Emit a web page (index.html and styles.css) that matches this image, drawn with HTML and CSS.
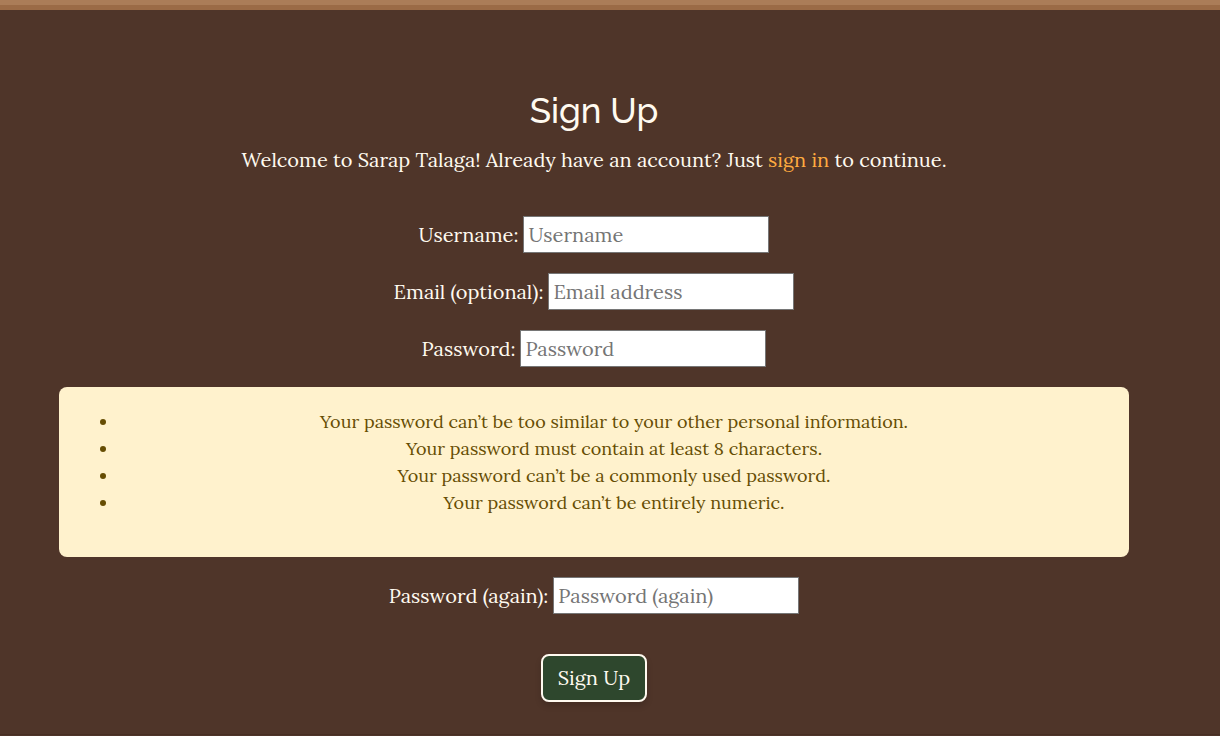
FILE: index.html
```html
<!DOCTYPE html>
<html lang="en">
<head>
<meta charset="utf-8">
<meta name="viewport" content="width=device-width, initial-scale=1">
<title>Sign Up</title>
<link rel="stylesheet" href="styles.css">
</head>
<body>
<header class="topbar"></header>
<main class="signup">
  <h1 class="title">Sign Up</h1>
  <p class="intro">Welcome to Sarap Talaga! Already have an account? Just <a class="link" href="#">sign in</a> to continue.</p>
  <form class="form">
    <div class="field"><label for="username">Username:</label><input class="input" id="username" type="text" placeholder="Username"></div>
    <div class="field"><label for="email">Email (optional):</label><input class="input" id="email" type="email" placeholder="Email address"></div>
    <div class="field"><label for="password1">Password:</label><input class="input" id="password1" type="password" placeholder="Password"></div>
    <ul class="hints">
      <li>Your password can’t be too similar to your other personal information.</li>
      <li>Your password must contain at least 8 characters.</li>
      <li>Your password can’t be a commonly used password.</li>
      <li>Your password can’t be entirely numeric.</li>
    </ul>
    <div class="field"><label for="password2">Password (again):</label><input class="input" id="password2" type="password" placeholder="Password (again)"></div>
    <button class="button" type="submit">Sign Up</button>
  </form>
</main>
</body>
</html>
```
FILE: styles.css
```css
* {
  box-sizing: border-box;
}

body {
  margin: 0;
  background: #4f3529;
  color: #fffaf0;
  font-family: Lora, "Liberation Serif", serif;
  font-size: 20px;
  line-height: 30px;
}

.topbar {
  height: 10px;
  background: #9b6b46;
  border-top: 5px solid #ab7d58;
}

.signup {
  padding: 80px 91px 32px 59px;
  border-bottom: 1px solid #472e23;
  text-align: center;
}

.title {
  margin: 0 0 13px;
  font-family: Raleway, Lato, sans-serif;
  font-size: 35px;
  font-weight: 500;
  line-height: 42px;
}

.intro {
  margin: 0 0 41px;
}

.link {
  color: #ffab40;
  text-decoration: none;
}

.form {
  display: flex;
  flex-direction: column;
  align-items: center;
  gap: 20px;
}

.field {
  display: flex;
  flex-wrap: wrap;
  justify-content: center;
  align-items: center;
  gap: 5px;
}

.input {
  width: 246px;
  height: 37px;
  padding: 1px 4px;
  border: 1px solid #767676;
  background: #fff;
  color: #000;
  font: inherit;
}

.input::placeholder {
  color: #757575;
}

.hints {
  width: 100%;
  margin: 0;
  padding: 21px 20px 41px 60px;
  border-radius: 8px;
  background: #fff2cd;
  color: #664d03;
  font-size: 18px;
  line-height: 27px;
}

.button {
  margin-top: 20px;
  padding: 7px 15px;
  border: 2px solid #fffaf0;
  border-radius: 8px;
  background: #2e472d;
  box-shadow: 0 4px 6px rgba(0, 0, 0, 0.15);
  color: #fffaf0;
  font: inherit;
}
```
